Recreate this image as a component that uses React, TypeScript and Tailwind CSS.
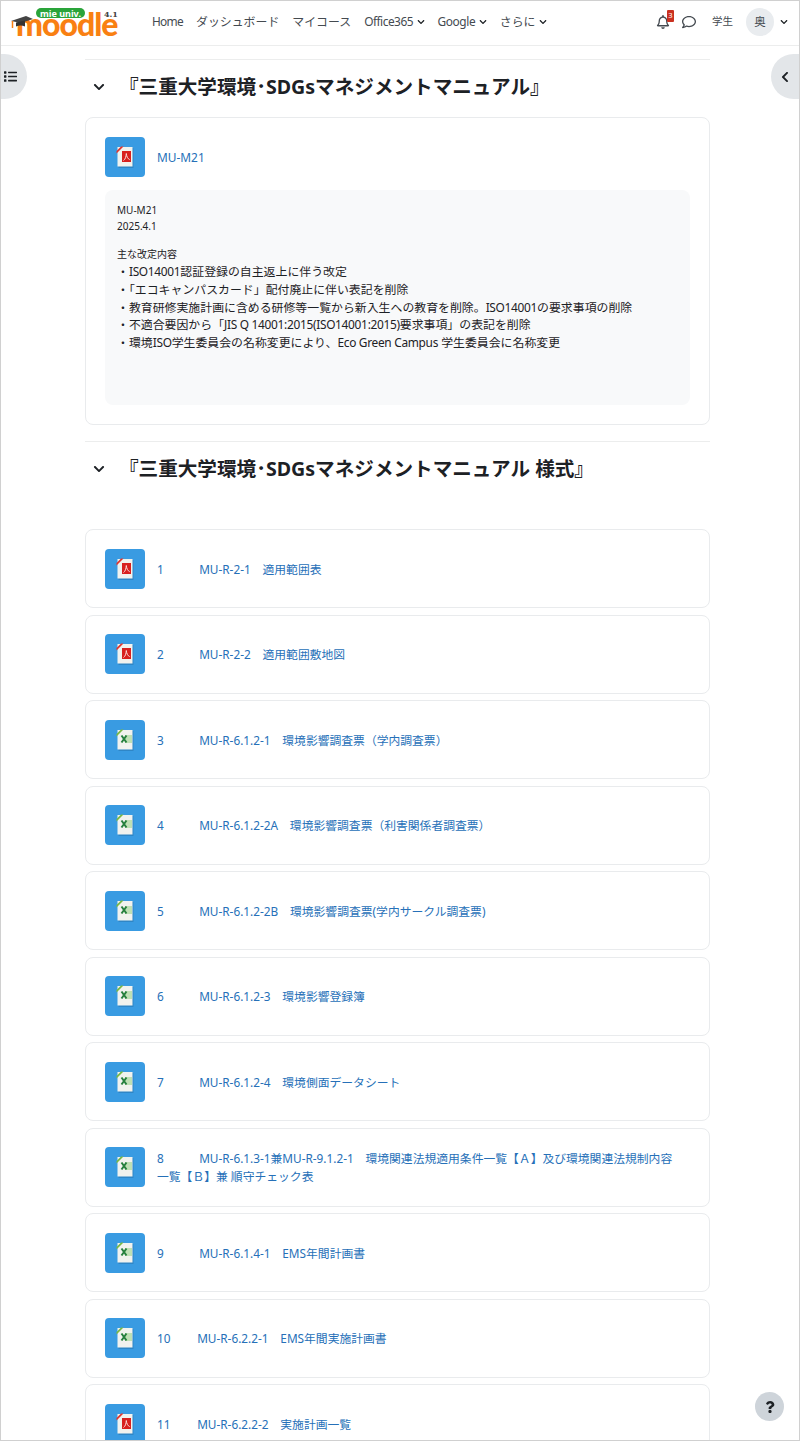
import React from 'react';
import { FaChevronDown, FaChevronLeft, FaList, FaQuestion, FaRegBell, FaRegComment } from 'react-icons/fa';

const fontStack = { fontFamily: '"Noto Sans", "Noto Sans CJK JP", sans-serif' };

type Row = { kind: 'pdf' | 'xls'; label: string };

// spacing inside the labels is how the course author typed them
const rows: Row[] = [
  { kind: 'pdf', label: '1\u3000\u3000\u3000MU-R-2-1\u3000適用範囲表' },
  { kind: 'pdf', label: '2\u3000\u3000\u3000MU-R-2-2\u3000適用範囲敷地図' },
  { kind: 'xls', label: '3\u3000\u3000\u3000MU-R-6.1.2-1\u3000環境影響調査票（学内調査票）' },
  { kind: 'xls', label: '4\u3000\u3000\u3000MU-R-6.1.2-2A\u3000環境影響調査票（利害関係者調査票）' },
  { kind: 'xls', label: '5\u3000\u3000\u3000MU-R-6.1.2-2B\u3000環境影響調査票(学内サークル調査票)' },
  { kind: 'xls', label: '6\u3000\u3000\u3000MU-R-6.1.2-3\u3000環境影響登録簿' },
  { kind: 'xls', label: '7\u3000\u3000\u3000MU-R-6.1.2-4\u3000環境側面データシート' },
  { kind: 'xls', label: '8\u3000\u3000\u3000MU-R-6.1.3-1兼MU-R-9.1.2-1\u3000環境関連法規適用条件一覧【Ａ】及び環境関連法規制内容一覧【Ｂ】兼 順守チェック表' },
  { kind: 'xls', label: '9\u3000\u3000\u3000MU-R-6.1.4-1\u3000EMS年間計画書' },
  { kind: 'xls', label: '10\u3000\u3000 MU-R-6.2.2-1\u3000EMS年間実施計画書' },
  { kind: 'pdf', label: '11\u3000\u3000 MU-R-6.2.2-2\u3000実施計画一覧' },
];

const FileIcon = ({ kind }: { kind: 'pdf' | 'xls' }) => (
  <div className="flex h-10 w-10 shrink-0 items-center justify-center rounded bg-[#399be2]">
    <svg width="20" height="24" viewBox="0 0 20 24">
      <path d="M3.5 3h15v20h-15z" fill="#1c5f92" opacity="0.35" />
      <path d="M2.5 2h15v19.5h-15z" fill="#f1f2ee" />
      {kind === 'pdf' ? (
        <>
          <path d="M1.5 6 L6 1.5 L8.5 1.5 L1.5 8.5z" fill="#e2352c" />
          <rect x="7" y="6" width="9" height="11" fill="#d8201e" />
          <path d="M8.5 15.5c1.8-1 2.6-4 2.8-7 .2 3 1.6 5.4 3.4 6.2" fill="none" stroke="#fbdcd8" strokeWidth="1" />
        </>
      ) : (
        <>
          <path d="M1.5 6 L6 1.5 L8.5 1.5 L1.5 8.5z" fill="#79b743" />
          <rect x="10" y="7" width="7" height="8" fill="#bfe0b4" />
          <path d="M6.5 7.5l5 7M11.5 7.5l-5 7" stroke="#27803e" strokeWidth="2" />
        </>
      )}
    </svg>
  </div>
);

const SectionHead = ({ title }: { title: string }) => (
  <div className="flex items-center">
    <FaChevronDown size={12} className="ml-[8px] text-[#1d2125]" />
    <h3 className="ml-[14px] text-[19.6px] leading-[28px] font-bold text-[#1d2125]">{title}</h3>
  </div>
);

const Logo = () => (
  <div className="relative mt-[2px] h-[40px] w-[113px] shrink-0">
    <div className="absolute top-[5px] left-[25px] flex h-[10px] w-[49px] items-center justify-center rounded-full bg-[#2aa43a] text-[9px] leading-none font-bold whitespace-nowrap text-white">
      mie univ.
    </div>
    <div className="absolute top-[15px] left-[5px] text-[32px] leading-[12px] font-black tracking-[-1px] text-[#f98012]" style={{ fontFamily: '"Lato", sans-serif' }}>
      moodle
    </div>
    <svg className="absolute top-[12px] left-[-1px]" width="24" height="16" viewBox="0 0 24 16">
      <path d="M1 6 L16 1 L23 4 L11 8z" fill="#444" />
      <path d="M6 7.5v4c3-1.5 6-1.5 9 0v-6z" fill="#333" />
      <path d="M2.5 6v7" stroke="#f98012" strokeWidth="1.5" />
    </svg>
    <div className="absolute top-[7px] left-[93px] text-[8px] leading-[8px] font-bold text-[#444]" style={{ fontFamily: '"DejaVu Serif", serif' }}>
      4.1
    </div>
  </div>
);

const NavItem = ({ label, caret, tight }: { label: string; caret?: boolean; tight?: string }) => (
  <span className="flex items-center gap-[3.5px] whitespace-nowrap">
    <span className={tight}>{label}</span>
    {caret && <FaChevronDown size={8} className="text-[#1d2125]" />}
  </span>
);

// latin runs in the description are a touch narrower than Noto Sans
const Lat = ({ children }: { children: React.ReactNode }) => <span className="tracking-[-0.3px]">{children}</span>;

export default function App() {
  return (
    <div className="relative h-[1441px] w-[800px] overflow-hidden border border-[#d0d0d0] bg-white" style={fontStack}>
      <header className="flex h-[45px] items-center border-b border-[#eceded] pr-[11px] pb-[2px] pl-[10px] text-[11.9px] text-[#444a50]">
        <Logo />
        <nav className="ml-[28px] flex items-center gap-[13px]">
          <NavItem label="Home" tight="tracking-[-0.7px]" />
          <NavItem label="ダッシュボード" />
          <NavItem label="マイコース" />
          <NavItem label="Office365" caret tight="tracking-[-0.5px]" />
          <NavItem label="Google" caret tight="tracking-[-0.4px]" />
          <NavItem label="さらに" caret />
        </nav>
        <div className="ml-auto flex items-center">
          <div className="relative">
            <FaRegBell size={14} />
            <span className="absolute -top-[5px] left-[11px] flex h-[12px] w-[7px] items-center justify-center rounded-[1px] bg-[#ca3120] text-[7.5px] text-white">3</span>
          </div>
          <FaRegComment size={14} className="ml-[12px]" />
          <span className="ml-[16px] text-[10.5px]">学生</span>
          <span className="ml-[13px] flex h-[28px] w-[28px] items-center justify-center rounded-full bg-[#e9ecef] text-[11.5px]">奥</span>
          <FaChevronDown size={8} className="ml-[6px] text-[#1d2125]" />
        </div>
      </header>

      {/* drawer toggles sit over the page */}
      <button className="absolute top-[53px] -left-[1px] flex h-[45px] w-[27px] items-center justify-center rounded-r-full bg-[#e3e6e9] pr-[7px] text-[#1d2125]">
        <FaList size={13} />
      </button>
      <button className="absolute top-[53px] -right-[1px] flex h-[45px] w-[29px] items-center justify-center rounded-l-full bg-[#e3e6e9] pr-[1px] text-[#1d2125]">
        <FaChevronLeft size={12} />
      </button>

      <main className="ml-[84px] w-[625px]">
        <div className="mt-[13px] border-t border-[#eceded] pt-[13px]">
          <SectionHead title="『三重大学環境･SDGsマネジメントマニュアル』" />
        </div>
        <div className="mt-[16px] h-[308px] rounded-lg border border-[#e9ebed] px-[19px] pt-[19px]">
          <div className="flex items-center gap-[12px] text-[11.9px] text-[#2670b8]">
            <FileIcon kind="pdf" />
            <span className="pt-[2px]">MU-M21</span>
          </div>
          <div className="mt-[13px] h-[215px] rounded-lg bg-[#f8f9fa] px-[12px] pt-[11px] text-[#1d2125]">
            <p className="text-[10px] leading-[18px]">MU-M21</p>
            <p className="text-[10px] leading-[14px]">2025.4.1</p>
            <p className="mt-[13px] text-[10px] leading-[17px]">主な改定内容</p>
            <div className="text-[11.9px] leading-[17.75px]">
              <p>・<Lat>ISO14001</Lat>認証登録の自主返上に伴う改定</p>
              <p>・「エコキャンパスカード」配付廃止に伴い表記を削除</p>
              <p>・教育研修実施計画に含める研修等一覧から新入生への教育を削除。<Lat>ISO14001</Lat>の要求事項の削除</p>
              <p>・不適合要因から「<Lat>JIS Q 14001:2015(ISO14001:2015)</Lat>要求事項」の表記を削除</p>
              <p>・環境<Lat>ISO</Lat>学生委員会の名称変更により、<Lat>Eco Green Campus</Lat> 学生委員会に名称変更</p>
            </div>
          </div>
        </div>

        <div className="mt-[16px] border-t border-[#eceded] pt-[13px]">
          <SectionHead title="『三重大学環境･SDGsマネジメントマニュアル 様式』" />
        </div>

        <div className="mt-[46px] flex flex-col gap-[6.5px]">
          {rows.map((row, i) => (
            <div key={i} className="flex h-[79px] shrink-0 items-center gap-[12px] rounded-lg border border-[#e9ebed] px-[19px] text-[11.8px] leading-[18px] text-[#2670b8]">
              <FileIcon kind={row.kind} />
              <span className="max-w-[522px]">{row.label}</span>
            </div>
          ))}
        </div>
      </main>

      <button className="absolute right-[15px] bottom-[19px] flex h-[29px] w-[29px] items-center justify-center rounded-full bg-[#ced4da] text-[#1d2125]">
        <FaQuestion size={12} />
      </button>
    </div>
  );
}
